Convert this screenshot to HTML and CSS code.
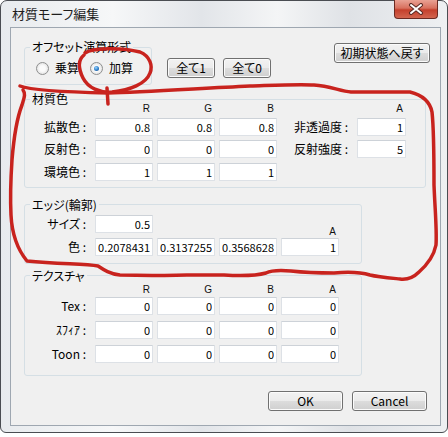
FILE: index.html
```html
<!DOCTYPE html>
<html lang="ja">
<head>
  <meta charset="UTF-8">
  <title>材質モーフ編集</title>
  <link rel="stylesheet" href="styles.css">
</head>
<body>
  <div class="window">
    <div class="titlebar">
      <span class="title">材質モーフ編集</span>
      <span class="close">
        <svg width="16" height="12" viewBox="0 0 16 12">
          <path d="M3 2 L13 10 M13 2 L3 10" stroke="#5a2a24" stroke-width="4" stroke-linecap="round"/>
          <path d="M3 2 L13 10 M13 2 L3 10" stroke="#fff" stroke-width="2" stroke-linecap="round"/>
        </svg>
      </span>
    </div>

    <div class="client">
      <div class="top">
        <fieldset class="grp grp-offset">
          <legend>オフセット演算形式</legend>
          <div class="radios">
            <label class="radio"><span class="dot"></span>乗算</label>
            <label class="radio on"><span class="dot"></span>加算</label>
          </div>
        </fieldset>
        <button class="btn btn-all first">全て1</button>
        <button class="btn btn-all">全て0</button>
        <button class="btn btn-reset">初期状態へ戻す</button>
      </div>

      <fieldset class="grp grp-mat">
        <legend>材質色</legend>
        <div class="grid mat">
          <span></span><span class="hd">R</span><span class="hd">G</span><span class="hd">B</span><span></span><span class="hd">A</span>
          <span class="lbl">拡散色 :</span>
          <input class="num" value="0.8"><input class="num" value="0.8"><input class="num" value="0.8">
          <span class="lbl">非透過度 :</span><input class="num" value="1">
          <span class="lbl">反射色 :</span>
          <input class="num" value="0"><input class="num" value="0"><input class="num" value="0">
          <span class="lbl">反射強度 :</span><input class="num" value="5">
          <span class="lbl">環境色 :</span>
          <input class="num" value="1"><input class="num" value="1"><input class="num" value="1">
        </div>
      </fieldset>

      <fieldset class="grp grp-edge">
        <legend>エッジ(輪郭)</legend>
        <div class="grid edge">
          <span class="lbl">サイズ :</span><input class="num" value="0.5">
          <span></span><span></span><span class="hd">A</span>
          <span class="lbl">色 :</span>
          <input class="num" value="0.2078431"><input class="num" value="0.3137255"><input class="num" value="0.3568628"><input class="num" value="1">
        </div>
      </fieldset>

      <fieldset class="grp grp-tex">
        <legend>テクスチャ</legend>
        <div class="grid tex">
          <span></span><span class="hd">R</span><span class="hd">G</span><span class="hd">B</span><span class="hd">A</span>
          <span class="lbl">Tex :</span>
          <input class="num" value="0"><input class="num" value="0"><input class="num" value="0"><input class="num" value="0">
          <span class="lbl">ｽﾌｨｱ :</span>
          <input class="num" value="0"><input class="num" value="0"><input class="num" value="0"><input class="num" value="0">
          <span class="lbl">Toon :</span>
          <input class="num" value="0"><input class="num" value="0"><input class="num" value="0"><input class="num" value="0">
        </div>
      </fieldset>

      <div class="actions">
        <button class="btn btn-dlg">OK</button>
        <button class="btn btn-dlg">Cancel</button>
      </div>
    </div>

    <!-- red pen marks drawn over the dialog -->
    <svg class="marks" width="448" height="437" viewBox="0 0 448 437">
      <path d="M85 53 C92 48 120 47 140 52 C150 56 153 66 150 73 C146 84 130 90 112 92 C100 93 88 88 83 78 C78 68 78 60 84 55"/>
      <path d="M107 88 L108 104"/>
      <path d="M20 86 C30 90 60 92 108 93 C140 92 190 89 250 86 C280 85 300 84 314 85 C330 86 340 91 351 92 L410 92 C422 95 430 102 432 112 C434 130 434 160 434 185 C435 210 437 230 436 245 C434 255 428 264 419 272 C414 277 408 280 400 279 C390 278 378 277 370 275 C360 272 345 272 334 273 C315 273 300 272 291 271 C280 270 272 270 266 273 C255 276 240 276 224 275 L187 275 C175 275 160 276 120 275 C110 274 104 270 98 266 C85 264 60 264 27 261 C18 250 12 235 11 215 C10 195 11 175 12 160 C14 135 17 118 22 105 C24 98 26 94 23 90"/>
    </svg>
  </div>
</body>
</html>
```

FILE: styles.css
```css
body {
  margin: 0;
  background: #fff;
  font-family: "Noto Sans CJK JP", sans-serif;
  font-size: 12px;
  line-height: 14px;
  font-feature-settings: "palt";
  color: #000;
}
.window {
  position: relative;
  display: flex;
  flex-direction: column;
  width: 448px;
  height: 433px;
  box-sizing: border-box;
  padding: 0 6px 6px 9px;
  border: 1px solid #4a4d52;
  border-radius: 7px 7px 6px 6px;
  background: linear-gradient(90deg, #e8ebee 0%, #f6f7f8 25%, #e2e5e9 45%, #f4f5f6 62%, #dfe2e6 78%, #eef0f2 100%);
}
.titlebar {
  display: flex;
  align-items: center;
  height: 26px;
  padding-left: 2px;
}
.title {
  flex: 1;
  font-size: 13px;
  color: #1e1e1e;
}
.close {
  align-self: flex-start;
  display: flex;
  align-items: center;
  justify-content: center;
  width: 42px;
  height: 18px;
  margin-top: -1px;
  margin-right: 3px;
  border: 1px solid #6b2a22;
  border-top: 0;
  border-radius: 0 0 4px 4px;
  background: linear-gradient(#e9a294 0%, #d8705e 45%, #c4402c 55%, #d2654f 100%);
}
.client {
  flex: 1;
  display: flex;
  flex-direction: column;
  border: 1px solid #9ea7b1;
  background: #f0f0f0;
}

.grp {
  margin: 0 0 0 13px;
  padding: 0;
  min-width: 0;
  border: 1px solid #d5dfe5;
  border-radius: 3px;
}
.grp legend {
  margin-left: 5px;
  padding: 0 2px;
  line-height: 12px;
}

.top {
  display: flex;
  align-items: flex-start;
}
.grp-offset {
  width: 128px;
  box-sizing: border-box;
  margin-top: 13px;
}
.radios {
  display: flex;
  align-items: center;
  gap: 11px;
  padding: 8px 0 9px 11px;
}
.radio {
  display: flex;
  align-items: center;
  gap: 6px;
}
.dot {
  display: flex;
  align-items: center;
  justify-content: center;
  width: 13px;
  height: 13px;
  box-sizing: border-box;
  border: 1px solid #8e8f8f;
  border-radius: 50%;
  background: radial-gradient(circle, #fbfbfb 0 35%, #d6d6d6 100%);
}
.radio.on .dot::after {
  content: "";
  width: 5px;
  height: 5px;
  border-radius: 50%;
  background: radial-gradient(circle at 40% 35%, #9ad6ff 0, #2d7cc8 55%, #17467a 100%);
}

.btn {
  height: 20px;
  margin: 0;
  padding: 0;
  border: 1px solid #707070;
  border-radius: 3px;
  background: linear-gradient(#f2f2f2 0, #ebebeb 50%, #dddddd 50%, #cfcfcf 100%);
  box-shadow: inset 0 0 0 1px #fbfbfb;
  font: inherit;
  color: #000;
}
.btn-all {
  width: 48px;
  margin-top: 30px;
  margin-left: 8px;
}
.btn-all.first {
  margin-left: 15px;
}
.btn-reset {
  width: 96px;
  margin-top: 15px;
  margin-left: 63px;
}

.grid {
  display: grid;
  column-gap: 4px;
  align-items: center;
}
.mat {
  grid-template-columns: 66px 58px 58px 58px 72px 49px;
  grid-template-rows: 8px 18px 18px 18px;
  row-gap: 4.5px;
  padding-bottom: 6px;
}
.edge {
  grid-template-columns: 66px 58px 58px 58px 58px;
  grid-template-rows: 18px 18px;
  row-gap: 5px;
  padding: 4px 0 7px;
}
.tex {
  grid-template-columns: 66px 58px 58px 58px 58px;
  grid-template-rows: 9px 18px 18px 18px;
  row-gap: 6px;
  padding-bottom: 12px;
}
.grp-mat {
  width: 402px;
  box-sizing: border-box;
  margin-top: 8px;
}
.grp-edge {
  width: 338px;
  box-sizing: border-box;
  margin-top: 11px;
}
.grp-tex {
  width: 338px;
  box-sizing: border-box;
  margin-top: 6px;
}
.hd {
  font-family: "Liberation Sans", sans-serif;
  font-size: 10px;
  line-height: 10px;
  text-align: right;
  padding-right: 3px;
  color: #111;
}
.edge .hd {
  align-self: end;
  margin-bottom: -4px;
}
.tex .hd {
  align-self: end;
  margin-bottom: -4px;
}
.lbl {
  text-align: right;
  white-space: nowrap;
  padding-right: 5px;
}
.num {
  width: 100%;
  height: 18px;
  box-sizing: border-box;
  margin: 0;
  padding: 0 2px;
  border: 1px solid #dde1e6;
  border-top-color: #cdd2d8;
  border-radius: 1px;
  background: #fff;
  font-family: "Noto Sans CJK JP", sans-serif;
  font-size: 11px;
  text-align: right;
  color: #000;
}

.actions {
  display: flex;
  justify-content: flex-end;
  gap: 9px;
  margin: 15px 13px 0 0;
}
.btn-dlg {
  width: 75px;
}

.marks {
  position: absolute;
  left: -1px;
  top: -1px;
  pointer-events: none;
  fill: none;
  stroke: #c8231e;
  stroke-width: 3.5;
  stroke-linecap: round;
  stroke-linejoin: round;
}
```
